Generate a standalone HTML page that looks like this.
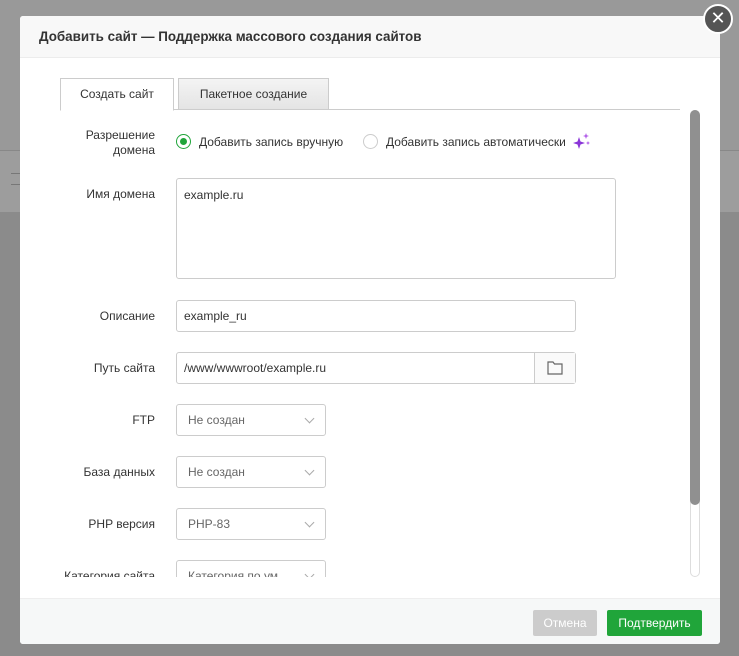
<!DOCTYPE html>
<html><head><meta charset="utf-8"><style>
*{box-sizing:border-box;margin:0;padding:0}
body{width:739px;height:656px;overflow:hidden;background:#8b8b8b;font-family:"Liberation Sans","DejaVu Sans",sans-serif;font-size:12px;color:#333;position:relative}
.bgtop{position:absolute;left:0;top:0;width:739px;height:150px;background:#999}
.bgmid{position:absolute;left:0;top:150px;width:739px;height:62px;background:#9d9d9d;border-top:1px solid #888}
.modal{position:absolute;left:20px;top:16px;width:700px;height:628px;background:#fff;border-radius:3px;overflow:hidden}
.hdr{height:42px;background:#f8f8f8;border-bottom:1px solid #ececec;padding:13px 0 0 19px;font-size:13.4px;font-weight:bold;color:#333}
.close{position:absolute;left:703px;top:4px;width:30px;height:30px;border-radius:50%;background:#555;border:2px solid #fff;color:#fff;text-align:center;font-size:18px;line-height:25px;font-weight:bold}
.tabs{position:absolute;left:40px;top:62px;width:620px;height:32px;border-bottom:1px solid #ccc}
.tab{position:absolute;top:0;height:32px;border:1px solid #ccc;text-align:center;line-height:30px;font-size:12px}
.t1{left:0;width:114px;background:#fff;border-bottom:1px solid #fff;height:33px}
.t2{left:118px;width:151px;background:linear-gradient(#f4f4f4,#e4e4e4)}
.lbl{position:absolute;right:565px;text-align:right;font-size:12px;color:#333;line-height:15px}
.inp{position:absolute;left:156px;border:1px solid #ccc;border-radius:3px;padding:0 7px;font-size:12px;color:#333;background:#fff}
.sel{position:absolute;left:156px;width:150px;height:32px;border:1px solid #ccc;border-radius:3px;padding:0 11px;line-height:30px;color:#666;background:#fff}
.sel:after{content:"";position:absolute;right:12px;top:10px;width:6px;height:6px;border-right:1px solid #aaa;border-bottom:1px solid #aaa;transform:rotate(45deg)}
.radio{position:absolute;top:117px;width:15px;height:15px;border-radius:50%;border:1px solid #ccc}
.ftr{position:absolute;left:0;top:582px;width:700px;height:46px;background:#f6f8f8;border-top:1px solid #eee}
.btn{position:absolute;top:11px;height:26px;border-radius:2px;color:#fff;line-height:26px;text-align:center;font-size:12px}
</style></head><body>
<div class="bgtop"></div><div class="bgmid"><div style="position:absolute;left:11px;top:22px;width:10px;height:12px;border:1px solid #777;border-left:none"></div></div>
<div class="modal">
<div class="hdr">Добавить сайт — Поддержка массового создания сайтов</div>
<div class="tabs"><div class="tab t1">Создать сайт</div><div class="tab t2">Пакетное создание</div></div>
<div style="position:absolute;left:0;top:94px;width:700px;height:467px;overflow:hidden">
 <div class="lbl" style="top:18px">Разрешение<br>домена</div>
 <div class="radio" style="left:156px;top:24px;border-color:#20a53a"><div style="position:absolute;left:3px;top:3px;width:7px;height:7px;border-radius:50%;background:#20a53a"></div></div>
 <div style="position:absolute;left:179px;top:25px">Добавить запись вручную</div>
 <div class="radio" style="left:343px;top:24px"></div>
 <div style="position:absolute;left:366px;top:25px">Добавить запись автоматически</div>
 <svg width="20" height="20" viewBox="0 0 20 20" style="position:absolute;left:552px;top:22px"><path d="M7 5l1.5 4.5L13 11l-4.5 1.5L7 17l-1.5-4.5L1 11l4.5-1.5z" fill="#8a35d8"/><path d="M14 1l.8 2.2L17 4l-2.2.8L14 7l-.8-2.2L11 4l2.2-.8z" fill="#b05ae8"/><path d="M16 9l.6 1.4L18 11l-1.4.6L16 13l-.6-1.4L14 11l1.4-.6z" fill="#b05ae8"/></svg>
 <div class="lbl" style="top:77px">Имя домена</div>
 <div class="inp" style="top:68px;width:440px;height:101px;padding-top:9px">example.ru</div>
 <div class="lbl" style="top:199px">Описание</div>
 <div class="inp" style="top:190px;width:400px;height:32px;line-height:30px">example_ru</div>
 <div class="lbl" style="top:251px">Путь сайта</div>
 <div class="inp" style="top:242px;width:400px;height:32px;line-height:30px">/www/wwwroot/example.ru
  <div style="position:absolute;right:0;top:0;width:41px;height:30px;border-left:1px solid #ccc;background:#fafafa">
   <svg width="16" height="14" style="position:absolute;left:12px;top:8px" viewBox="0 0 16 14"><path d="M1 1h5l1.5 2H15v10H1z" fill="none" stroke="#666" stroke-width="1.2"/></svg></div></div>
 <div class="lbl" style="top:303px">FTP</div><div class="sel" style="top:294px">Не создан</div>
 <div class="lbl" style="top:355px">База данных</div><div class="sel" style="top:346px">Не создан</div>
 <div class="lbl" style="top:407px">PHP версия</div><div class="sel" style="top:398px">PHP-83</div>
 <div class="lbl" style="top:459px">Категория сайта</div><div class="sel" style="top:450px">Категория по ум</div>
</div>
<div style="position:absolute;left:670px;top:94px;width:10px;height:467px;border:1px solid #ddd;border-radius:5px"></div>
<div style="position:absolute;left:670px;top:94px;width:10px;height:395px;background:#909090;border-radius:5px"></div>
<div class="ftr"><div class="btn" style="left:513px;width:64px;background:#ccc">Отмена</div><div class="btn" style="left:587px;width:95px;background:#20a53a">Подтвердить</div></div>
</div>
<div class="close">✕</div>
</body></html>
